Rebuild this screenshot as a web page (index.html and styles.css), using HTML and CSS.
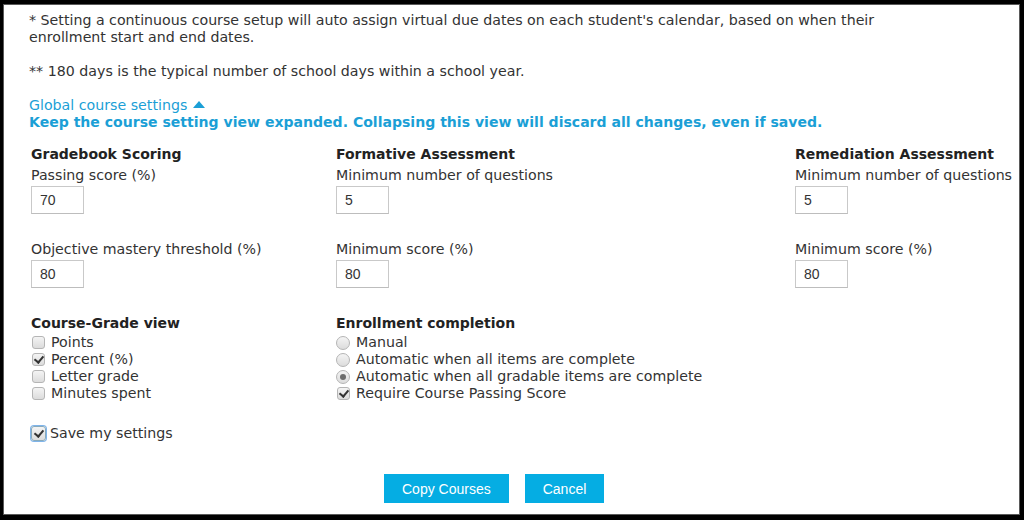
FILE: index.html
```html
<!DOCTYPE html>
<html lang="en">
<head>
<meta charset="utf-8">
<title>Global course settings</title>
<link rel="stylesheet" href="styles.css">
</head>
<body>
<div class="frame">
  <div class="panel">
    <p class="note">* Setting a continuous course setup will auto assign virtual due dates on each student's calendar, based on when their<br>enrollment start and end dates.</p>
    <p class="note">** 180 days is the typical number of school days within a school year.</p>
    <a class="toggle" href="#">Global course settings <svg class="caret" width="12" height="7" viewBox="0 0 12 7"><path d="M0 7 L6 0 L12 7 Z" fill="currentColor"/></svg></a>
    <div class="warning">Keep the course setting view expanded. Collapsing this view will discard all changes, even if saved.</div>

    <div class="grid">
      <div class="col">
        <h3 class="heading">Gradebook Scoring</h3>
        <div class="field">
          <label class="label">Passing score (%)</label>
          <input class="box" type="text" value="70">
        </div>
        <div class="field">
          <label class="label">Objective mastery threshold (%)</label>
          <input class="box" type="text" value="80">
        </div>
      </div>
      <div class="col">
        <h3 class="heading">Formative Assessment</h3>
        <div class="field">
          <label class="label">Minimum number of questions</label>
          <input class="box" type="text" value="5">
        </div>
        <div class="field">
          <label class="label">Minimum score (%)</label>
          <input class="box" type="text" value="80">
        </div>
      </div>
      <div class="col">
        <h3 class="heading">Remediation Assessment</h3>
        <div class="field">
          <label class="label">Minimum number of questions</label>
          <input class="box" type="text" value="5">
        </div>
        <div class="field">
          <label class="label">Minimum score (%)</label>
          <input class="box" type="text" value="80">
        </div>
      </div>

      <div class="col">
        <h3 class="heading heading-list">Course-Grade view</h3>
        <label class="opt"><input class="cb" type="checkbox">Points</label>
        <label class="opt"><input class="cb" type="checkbox" checked>Percent (%)</label>
        <label class="opt"><input class="cb" type="checkbox">Letter grade</label>
        <label class="opt"><input class="cb" type="checkbox">Minutes spent</label>
      </div>
      <div class="col">
        <h3 class="heading heading-list">Enrollment completion</h3>
        <label class="opt"><input class="rb" type="radio" name="ec">Manual</label>
        <label class="opt"><input class="rb" type="radio" name="ec">Automatic when all items are complete</label>
        <label class="opt"><input class="rb" type="radio" name="ec" checked>Automatic when all gradable items are complete</label>
        <label class="opt"><input class="cb" type="checkbox" checked>Require Course Passing Score</label>
      </div>
      <div class="col"></div>
    </div>

    <label class="opt save"><input class="cb cb-focus" type="checkbox" checked>Save my settings</label>

    <div class="actions">
      <button class="btn" type="button">Copy Courses</button>
      <button class="btn" type="button">Cancel</button>
    </div>
  </div>
</div>
</body>
</html>
```

FILE: styles.css
```css
* { box-sizing: border-box; }

html, body {
  margin: 0;
  padding: 0;
  background: #000;
}

.frame {
  width: 1024px;
  height: 520px;
  background: #000;
  padding: 4px 4px 5px 3px;
}

.panel {
  height: 100%;
  background: #fff;
  border: 1px solid #5a5a5a;
  padding: 7px 10px 0 25px;
  font-family: "DejaVu Sans", Verdana, sans-serif;
  font-size: 14.2px;
  line-height: 17px;
  color: #333;
}

.note {
  margin: 0 0 17px 0;
}

.toggle {
  display: inline-block;
  color: #1b9fd6;
  text-decoration: none;
}

.caret {
  vertical-align: 2px;
  margin-left: 1px;
}

.warning {
  color: #1b9fd6;
  font-weight: bold;
  font-size: 14.05px;
}

.grid {
  display: grid;
  grid-template-columns: 305px 459px auto;
  margin-top: 15px;
  padding-left: 2px;
}

.heading {
  margin: 0 0 4px 0;
  font-size: 14px;
  line-height: 17px;
  font-weight: bold;
  color: #222;
}

.heading-list {
  margin-bottom: 2px;
}

.field {
  display: flex;
  flex-direction: column;
  align-items: flex-start;
  margin-bottom: 27px;
}

.field:last-child {
  margin-bottom: 27px;
}

.label {
  white-space: nowrap;
}

.box {
  margin-top: 2px;
  width: 53px;
  height: 28px;
  border: 1px solid #c9c9c9;
  border-bottom-color: #bdbdbd;
  padding: 0 0 0 8px;
  font-family: "Liberation Sans", Arial, sans-serif;
  font-size: 14px;
  color: #333;
  background: #fff;
  outline: none;
}

.opt {
  display: flex;
  align-items: center;
  height: 17px;
  white-space: nowrap;
}

.cb, .rb {
  appearance: none;
  -webkit-appearance: none;
  margin: 0 6px 0 1px;
  width: 13px;
  height: 13px;
  flex: none;
  position: relative;
  background: linear-gradient(#f4f4f4, #dcdcdc);
  border: 1px solid #b5b5b5;
}

.cb {
  border-radius: 3px;
}

.rb {
  border-radius: 50%;
  margin-left: 0;
  width: 14px;
  height: 14px;
}

.cb:checked::after {
  content: "";
  position: absolute;
  left: 3px;
  top: 0px;
  width: 4px;
  height: 7px;
  border: solid #333;
  border-width: 0 2px 2px 0;
  transform: rotate(40deg);
}

.rb:checked::after {
  content: "";
  position: absolute;
  left: 3px;
  top: 3px;
  width: 6px;
  height: 6px;
  border-radius: 50%;
  background: #6d6d6d;
}

.save {
  margin-top: 23px;
  padding-left: 2px;
}

.cb-focus {
  margin-left: 0;
  margin-right: 4px;
  width: 15px;
  height: 15px;
  box-shadow: 0 0 0 1px #7fb4ea;
  border-color: #8ab;
}

.cb-focus:checked::after {
  left: 4px;
  top: 1px;
}

.actions {
  display: flex;
  gap: 16px;
  margin-top: 32px;
  padding-left: 355px;
}

.btn {
  height: 29px;
  padding: 0 18px;
  border: none;
  background: #05ade3;
  color: #fff;
  font-family: "Liberation Sans", Arial, sans-serif;
  font-size: 14px;
  cursor: pointer;
}
```
